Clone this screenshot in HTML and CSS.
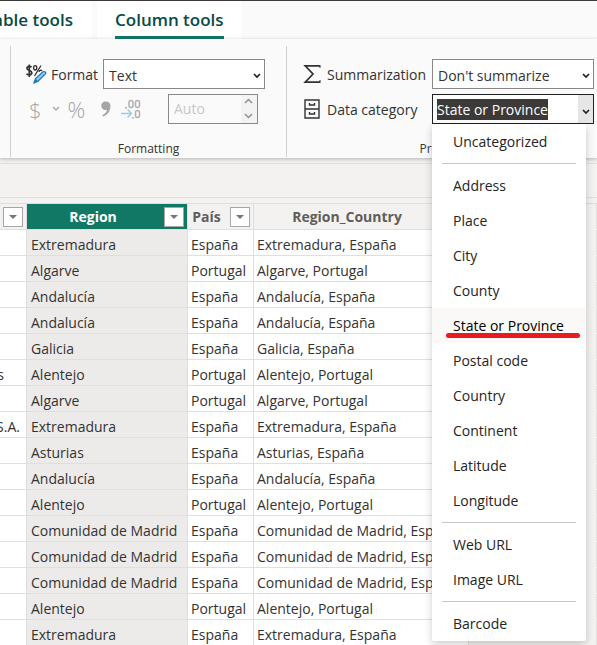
FILE: index.html
```html
<!DOCTYPE html>
<html lang="en">
<head>
<meta charset="utf-8">
<title>Column tools</title>
<link rel="stylesheet" href="styles.css">
</head>
<body>
<nav class="tabs">
  <a class="tab tab-table" href="#"><span>Table tools</span></a>
  <a class="tab tab-active" href="#"><span>Column tools</span></a>
</nav>

<section class="ribbon">
  <div class="group formatting">
    <div class="row">
      <svg class="icon-format" viewBox="0 0 22 20" width="22" height="20" aria-hidden="true">
        <g fill="none" stroke="#333" stroke-width="1.7">
          <path d="M6.500 3.200C5.800 2 2 1.800 2 4.400C2 6.800 6.800 6 6.800 8.800C6.800 11.600 2.500 11.200 1.500 9.800M4.300 .5V13"/>
          <path d="M16 1.500 9.500 12" stroke-width="1.300"/>
          <ellipse cx="10.200" cy="3.800" rx="1.600" ry="2.200" stroke-width="1.300"/>
          <path d="M17 7a1.700 2 0 0 0-3 1" stroke-width="1.300"/>
        </g>
        <path d="m9 19 1.500-4.500L18 7.800q1.300-.7 2.300.2t-.1 2.200L13 17.300z" fill="#8cc8f0" stroke="#1b78bd" stroke-width="1.200"/>
        <path d="m9 19 1.500-4.500L13 17.300z" fill="#1b78bd"/>
      </svg>
      <label for="format">Format</label>
      <div class="select-wrap">
        <select id="format"><option>Text</option></select>
        <svg class="chevron" viewBox="0 0 8 6" width="8" height="6" aria-hidden="true"><path d="m1 1 3 3 3-3"/></svg>
      </div>
    </div>
    <div class="row numeric">
      <button class="tool tool-dollar" type="button" disabled aria-label="Currency">$
        <svg viewBox="0 0 8 6" width="8" height="6" aria-hidden="true"><path d="m1 1 3 3 3-3" fill="none" stroke="#aaa" stroke-width="1.500"/></svg>
      </button>
      <button class="tool" type="button" disabled aria-label="Percentage">%</button>
      <button class="tool tool-comma" type="button" disabled aria-label="Thousands separator">
        <svg viewBox="0 0 10 16" width="10" height="16" aria-hidden="true"><path d="M5 .5a4.300 4.300 0 1 0 1 8.300C5.500 11.500 4 13 1.500 14v1.500C6.500 14.500 9.500 10 9.500 5 9.500 2.200 7.500.5 5 .5z" fill="#a6a6a6"/></svg>
      </button>
      <button class="tool tool-decimals" type="button" disabled aria-label="Decimal places">
        <svg viewBox="0 0 20 20" width="20" height="20" aria-hidden="true">
          <g fill="none" stroke="#b0b0b0" stroke-width="1.500">
            <rect x="8" y="1.500" width="4" height="7" rx="2"/><rect x="14.500" y="1.500" width="4" height="7" rx="2"/><rect x="14.500" y="11.500" width="4" height="7" rx="2"/>
          </g>
          <path d="M4 8h2v1.500H4zM11 18h2v1.500h-2z" fill="#b0b0b0"/>
          <path d="M0 14.500h10M6.500 10.500l4 4-4 4" fill="none" stroke="#9ccbe6" stroke-width="1.500"/>
        </svg>
      </button>
      <div class="spinner">
        <input type="text" value="Auto" aria-label="Decimals" disabled>
        <svg viewBox="0 0 16 28" width="16" height="28" aria-hidden="true"><path d="m4 8 3.500-3.500L11 8M4 19l3.500 3.500L11 19" fill="none" stroke="#909090" stroke-width="1.500"/></svg>
      </div>
    </div>
    <h2>Formatting</h2>
  </div>

  <div class="group properties">
    <div class="row">
      <svg viewBox="0 0 18 20" width="18" height="20" aria-hidden="true"><path d="M17 1.800H2.200L10 10l-7.800 8.200H17" fill="none" stroke="#333" stroke-width="1.700"/><path d="M17 1v3M17 16v3" stroke="#333" stroke-width="1"/></svg>
      <label for="summarization">Summarization</label>
      <div class="select-wrap">
        <select id="summarization"><option>Don't summarize</option></select>
        <svg class="chevron" viewBox="0 0 8 6" width="8" height="6" aria-hidden="true"><path d="m1 1 3 3 3-3"/></svg>
      </div>
    </div>
    <div class="row">
      <svg viewBox="0 0 18 20" width="18" height="20" aria-hidden="true"><path d="M2 1h14v18H2zM2 10h14M6.500 4v2h5V4M6.500 13v2h5v-2" fill="none" stroke="#333" stroke-width="1.400"/></svg>
      <label for="category">Data category</label>
      <div class="combo">
        <button class="combo-box" id="category" type="button" aria-haspopup="listbox" aria-expanded="true">
          <span class="selected-text">State or Province</span>
          <span class="combo-arrow"><svg class="chevron" viewBox="0 0 8 6" width="8" height="6" aria-hidden="true"><path d="m1 1 3 3 3-3"/></svg></span>
        </button>
        <ul class="menu" role="listbox" aria-label="Data category">
          <li role="option">Uncategorized</li>
          <li class="rule" role="separator"></li>
          <li role="option">Address</li>
          <li role="option">Place</li>
          <li role="option">City</li>
          <li role="option">County</li>
          <li class="current" role="option" aria-selected="true">State or Province</li>
          <li role="option">Postal code</li>
          <li role="option">Country</li>
          <li role="option">Continent</li>
          <li role="option">Latitude</li>
          <li role="option">Longitude</li>
          <li class="rule" role="separator"></li>
          <li role="option">Web URL</li>
          <li role="option">Image URL</li>
          <li class="rule" role="separator"></li>
          <li role="option">Barcode</li>
        </ul>
      </div>
    </div>
    <h2>Properties</h2>
  </div>
</section>

<div class="formula-bar"></div>

<main class="grid-area">
  <table>
    <colgroup><col class="c-name"><col class="c-region"><col class="c-pais"><col class="c-full"><col></colgroup>
    <thead>
      <tr>
        <th><div class="head"><span></span><button type="button" aria-label="Filter"></button></div></th>
        <th class="active"><div class="head"><span>Region</span><button type="button" aria-label="Filter Region"></button></div></th>
        <th><div class="head"><span>País</span><button type="button" aria-label="Filter País"></button></div></th>
        <th><div class="head"><span>Region_Country</span><button type="button" aria-label="Filter Region_Country"></button></div></th>
        <th class="blank"></th>
      </tr>
    </thead>
    <tbody>
      <tr><td></td><td>Extremadura</td><td>España</td><td>Extremadura, España</td><td class="blank"></td></tr>
      <tr><td></td><td>Algarve</td><td>Portugal</td><td>Algarve, Portugal</td><td class="blank"></td></tr>
      <tr><td></td><td>Andalucía</td><td>España</td><td>Andalucía, España</td><td class="blank"></td></tr>
      <tr><td></td><td>Andalucía</td><td>España</td><td>Andalucía, España</td><td class="blank"></td></tr>
      <tr><td></td><td>Galicia</td><td>España</td><td>Galicia, España</td><td class="blank"></td></tr>
      <tr><td class="end-s"><span>s</span></td><td>Alentejo</td><td>Portugal</td><td>Alentejo, Portugal</td><td class="blank"></td></tr>
      <tr><td></td><td>Algarve</td><td>Portugal</td><td>Algarve, Portugal</td><td class="blank"></td></tr>
      <tr><td><span>S.A.</span></td><td>Extremadura</td><td>España</td><td>Extremadura, España</td><td class="blank"></td></tr>
      <tr><td></td><td>Asturias</td><td>España</td><td>Asturias, España</td><td class="blank"></td></tr>
      <tr><td></td><td>Andalucía</td><td>España</td><td>Andalucía, España</td><td class="blank"></td></tr>
      <tr><td></td><td>Alentejo</td><td>Portugal</td><td>Alentejo, Portugal</td><td class="blank"></td></tr>
      <tr><td></td><td>Comunidad de Madrid</td><td>España</td><td>Comunidad de Madrid, España</td><td class="blank"></td></tr>
      <tr><td></td><td>Comunidad de Madrid</td><td>España</td><td>Comunidad de Madrid, España</td><td class="blank"></td></tr>
      <tr><td></td><td>Comunidad de Madrid</td><td>España</td><td>Comunidad de Madrid, España</td><td class="blank"></td></tr>
      <tr><td></td><td>Alentejo</td><td>Portugal</td><td>Alentejo, Portugal</td><td class="blank"></td></tr>
      <tr><td></td><td>Extremadura</td><td>España</td><td>Extremadura, España</td><td class="blank"></td></tr>
    </tbody>
  </table>
</main>
</body>
</html>
```

FILE: styles.css
```css
* { box-sizing: border-box; }

body {
  margin: 0;
  height: 100vh;
  overflow: hidden;
  background: #f3f2f1;
  color: #333;
  font: 14px/20px "Open Sans", "Noto Sans", sans-serif;
}

button, input, select { font: inherit; color: inherit; }

/* Tab strip */
.tabs {
  display: flex;
  gap: 5px;
  height: 39px;
  border-top: 1px solid #3b3a39;
  background: #fafafa;
}
.tab {
  display: flex;
  background: #fff;
  color: #084a43;
  font-size: 17px;
  font-weight: 600;
  line-height: 38px;
  text-decoration: none;
  white-space: nowrap;
}
.tab-table { width: 92px; padding-right: 19px; justify-content: flex-end; }
.tab-active { padding: 0 18px; }
.tab-active span { height: 38px; border-bottom: 3px solid #117865; }

/* Ribbon */
.ribbon {
  display: flex;
  height: 119px;
  padding: 7px 0 1px 10px;
  background: #fafafa;
  box-shadow: 0 1px 4px #0004;
  position: relative;
  z-index: 2;
}
.group {
  display: flex;
  flex-direction: column;
  gap: 5px;
  padding: 13px 0 0 16px;
  border-left: 1px solid #d0d0d0;
}
.formatting { width: 276px; padding-left: 14px; }
.properties { flex: 1; padding-right: 3px; }
.row { display: flex; align-items: center; height: 30px; }
.row label { padding: 2px 0 0 4px; white-space: nowrap; }
.group h2 {
  margin: 10px 0 0;
  font-size: 12px;
  font-weight: 400;
  line-height: 20px;
  text-align: center;
}
.formatting h2 { padding-right: 14px; }
.select-wrap { position: relative; width: 162px; }
.formatting .select-wrap { margin-left: 5px; }
.properties .row label { width: 111px; padding-left: 6px; }
.properties .select-wrap, .combo { flex: 1; }
select {
  appearance: none;
  width: 100%;
  height: 30px;
  padding: 4px 5px 0;
  border: 1px solid #8a8886;
  border-radius: 0;
  background: #fff;
}
.chevron path { fill: none; stroke: #222; stroke-width: 1.7; }
.select-wrap .chevron { position: absolute; right: 4px; top: 14px; }

.numeric { color: #a6a6a6; }
.tool {
  display: flex;
  align-items: center;
  padding: 0;
  margin-right: 16px;
  border: 0;
  background: none;
  color: #a6a6a6;
  font-size: 22px;
  font-weight: 300;
}
.tool-dollar { gap: 10px; margin-left: 4px; margin-right: 8px; }
.tool-comma { margin-right: 10px; }
.tool-decimals { margin-right: 0; }
.spinner {
  display: flex;
  width: 90px;
  height: 30px;
  margin: 0 28px 0 auto;
  border: 1px solid #8a8886;
  background: #fafafa;
}
.spinner input {
  flex: 1;
  min-width: 0;
  padding: 0 5px;
  border: 0;
  background: none;
  color: #c8c8c8;
}
.spinner svg { background: #f3f3f3; }

/* Data category drop-down */
.combo { position: relative; }
.combo-box {
  display: flex;
  align-items: center;
  width: 100%;
  height: 30px;
  padding: 0 0 0 4px;
  border: 1px solid #222;
  background: #fff;
}
.selected-text { padding-top: 1px; background: #3b3a39; color: #fff; white-space: nowrap; }
.combo-arrow {
  display: flex;
  align-items: center;
  justify-content: center;
  width: 15px;
  height: 28px;
  margin-left: auto;
  padding-top: 6px;
  background: #e6e6e6;
}
.menu {
  position: absolute;
  top: 30px;
  left: 0;
  right: 8px;
  margin: 0;
  padding: 0;
  list-style: none;
  background: #fff;
  border-radius: 0 0 2px 2px;
  box-shadow: 0 3px 8px #0003;
  color: #252423;
}
.menu li { height: 35px; padding-left: 21px; line-height: 35px; }
.menu .rule {
  height: 1px;
  margin: 4px 10px;
  padding: 0;
  background: #c8c6c4;
}
.menu .current { position: relative; background: #faf9f8; color: #000; }
.current::after {
  content: "";
  position: absolute;
  left: 14px;
  right: 6px;
  bottom: 5px;
  height: 5px;
  border-radius: 3px;
  background: #e81b20;
}

/* Data grid */
.formula-bar {
  height: 40px;
  border-top: 5px solid #f3f2f1;
  border-bottom: 1px solid #e1dfdd;
  box-shadow: inset 0 1px #e1dfdd;
}
.grid-area { margin-left: -1px; padding-top: 5px; }
table { width: 100%; border-collapse: collapse; table-layout: fixed; }
.c-name { width: 27px; }
.c-region { width: 161px; }
.c-pais { width: 66px; }
.c-full { width: 215px; }
th, td {
  height: 26px;
  padding: 4px 4px 0;
  border: 1px solid #e1dfdd;
  overflow: hidden;
  line-height: 20px;
  white-space: nowrap;
}
td { background: #fff; }
td:first-child { padding: 4px 6px 0 0; }
td:first-child span { display: flex; justify-content: flex-end; }
td.end-s:first-child { padding-right: 22px; }
td:nth-child(2) { background: #edebe9; }
td:nth-child(3), td:nth-child(4) { padding-left: 3px; }
th { padding: 0 3px 0 0; background: #f3f2f1; color: #605e5c; font-weight: 700; }
th.active { background: #117865; color: #fff; }
td.blank, th.blank { background: #f3f2f1; border-bottom-color: #f3f2f1; }
.head { display: flex; align-items: center; justify-content: flex-end; }
.head span { flex: 1; padding-right: 5px; }
.head button {
  display: flex;
  align-items: center;
  justify-content: center;
  flex: none;
  width: 20px;
  height: 20px;
  padding: 0;
  border: 1px solid #a6a6a6;
  background: #fff;
}
.head button::after {
  content: "";
  border: 4px solid transparent;
  border-top-color: #777;
  border-bottom: 0;
}
```
